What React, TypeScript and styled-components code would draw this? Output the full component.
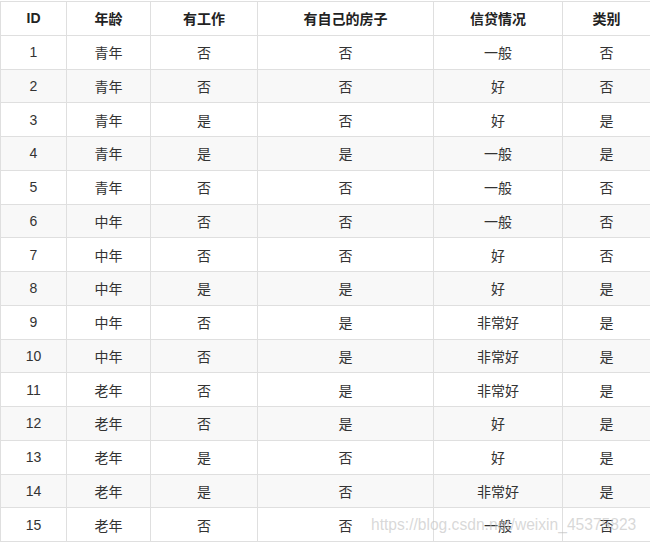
import React from "react";
import styled, { createGlobalStyle } from "styled-components";

const Global = createGlobalStyle`
  html, body { margin: 0; padding: 0; background: #fff; }
  body { font-family: "Liberation Sans", "Noto Sans CJK SC", sans-serif; }
`;

const Wrap = styled.div`
  position: relative;
  width: 650px;
  padding-top: 1px;
`;

const Table = styled.table`
  width: 650px;
  border-collapse: collapse;
  table-layout: fixed;
  font-size: 14px;
  color: #333;
`;

const Row = styled.tr<{ $alt?: boolean }>`
  height: 33.75px;
  background: ${(p) => (p.$alt ? "#f8f8f8" : "#fff")};
`;

const Th = styled.th`
  border: 1px solid #dfdfdf;
  font-weight: bold;
  color: #222;
  text-align: center;
  padding: 0;
`;

const Td = styled.td`
  border: 1px solid #dfdfdf;
  text-align: center;
  padding: 0;
`;

const Watermark = styled.div`
  position: absolute;
  left: 371px;
  top: 516px;
  font-family: "Liberation Sans", sans-serif;
  font-size: 15.6px;
  color: rgba(190, 190, 190, 0.6);
  white-space: nowrap;
  pointer-events: none;
`;

const widths = [66, 84, 107, 176, 129, 88];
const headers = ["ID", "年龄", "有工作", "有自己的房子", "信贷情况", "类别"];
const data: string[][] = [
  ["1", "青年", "否", "否", "一般", "否"],
  ["2", "青年", "否", "否", "好", "否"],
  ["3", "青年", "是", "否", "好", "是"],
  ["4", "青年", "是", "是", "一般", "是"],
  ["5", "青年", "否", "否", "一般", "否"],
  ["6", "中年", "否", "否", "一般", "否"],
  ["7", "中年", "否", "否", "好", "否"],
  ["8", "中年", "是", "是", "好", "是"],
  ["9", "中年", "否", "是", "非常好", "是"],
  ["10", "中年", "否", "是", "非常好", "是"],
  ["11", "老年", "否", "是", "非常好", "是"],
  ["12", "老年", "否", "是", "好", "是"],
  ["13", "老年", "是", "否", "好", "是"],
  ["14", "老年", "是", "否", "非常好", "是"],
  ["15", "老年", "否", "否", "一般", "否"],
];

export default function App() {
  return (
    <Wrap>
      <Global />
      <Table>
        <colgroup>
          {widths.map((w, i) => (
            <col key={i} style={{ width: w }} />
          ))}
        </colgroup>
        <thead>
          <Row>
            {headers.map((h) => (
              <Th key={h}>{h}</Th>
            ))}
          </Row>
        </thead>
        <tbody>
          {data.map((r, i) => (
            <Row key={i} $alt={i % 2 === 1}>
              {r.map((c, j) => (
                <Td key={j}>{c}</Td>
              ))}
            </Row>
          ))}
        </tbody>
      </Table>
      <Watermark>https://blog.csdn.net/weixin_45375823</Watermark>
    </Wrap>
  );
}
